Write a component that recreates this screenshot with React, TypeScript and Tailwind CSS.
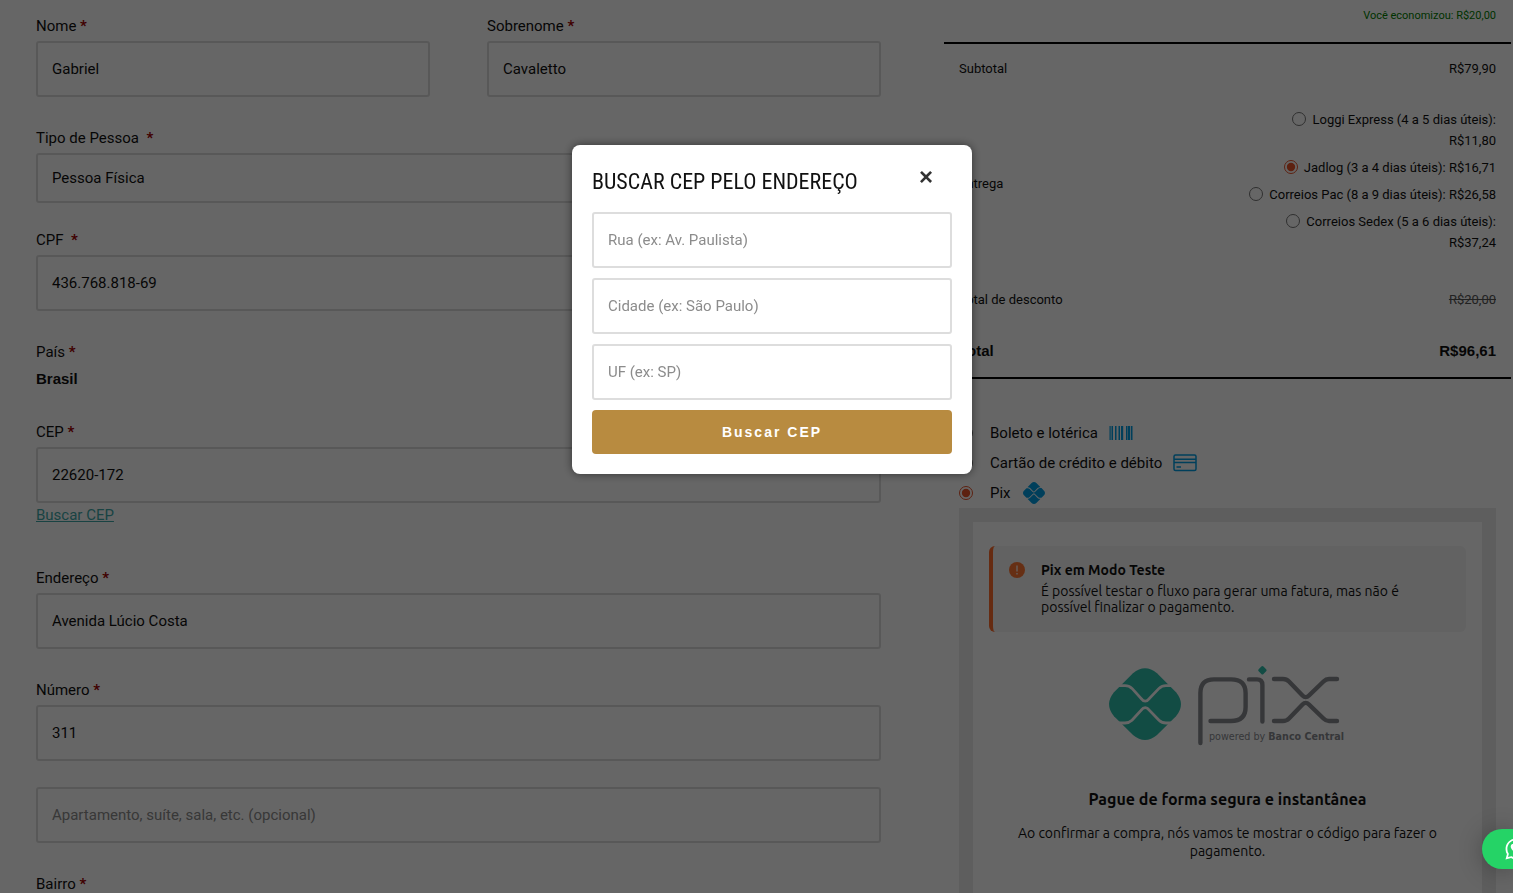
import React from "react";
import { FaPix, FaWhatsapp } from "react-icons/fa6";

const boxClass =
  "block w-full rounded-[3px] border-2 border-[#ddd] bg-white px-[14px] text-[15px] text-[#111] placeholder:text-[#8c8c8c] outline-none";

function Required() {
  return <span className="font-bold text-[#a00000]">*</span>;
}

type FieldProps = {
  id: string;
  label?: string;
  value?: string;
  placeholder?: string;
  spaced?: boolean;
  children?: React.ReactNode;
};

function Field({ id, label, value, placeholder, spaced, children }: FieldProps) {
  return (
    <div>
      {label && (
        <label htmlFor={id} className="block text-[15px] leading-[30px]">
          {label} {spaced && <>&nbsp;</>}
          <Required />
        </label>
      )}
      {children ?? (
        <input
          id={id}
          type="text"
          defaultValue={value}
          placeholder={placeholder}
          aria-label={label ?? placeholder}
          className={`${boxClass} h-14`}
        />
      )}
    </div>
  );
}

function Radio(props: { id: string; name: string; checked?: boolean }) {
  return (
    <input
      type="radio"
      id={props.id}
      name={props.name}
      defaultChecked={props.checked}
      className="size-[14px] shrink-0 align-[-2px] accent-[#e8532a]"
    />
  );
}

const shipping = [
  { id: "loggi", name: "Loggi Express (4 a 5 dias úteis):", price: "R$11,80", wrap: true },
  { id: "jadlog", name: "Jadlog (3 a 4 dias úteis):", price: "R$16,71", checked: true },
  { id: "pac", name: "Correios Pac (8 a 9 dias úteis):", price: "R$26,58" },
  { id: "sedex", name: "Correios Sedex (5 a 6 dias úteis):", price: "R$37,24", wrap: true },
];

function BarcodeIcon() {
  return (
    <svg width="24" height="14" viewBox="0 0 24 14" fill="#009ee3" aria-hidden="true">
      <rect x="0.500" width="1.200" height="14" />
      <rect x="2.500" width="1.500" height="14" />
      <rect x="6" width="1.500" height="14" />
      <rect x="9.500" width="1.500" height="14" />
      <rect x="12" width="2.200" height="14" />
      <rect x="17" width="1.500" height="14" />
      <rect x="19" width="2" height="14" />
      <rect x="21.800" width="1.700" height="14" />
    </svg>
  );
}

function CardIcon() {
  return (
    <svg width="24" height="18" viewBox="0 0 24 18" fill="none" stroke="#009ee3" strokeWidth="1.5" aria-hidden="true">
      <rect x="1" y="1" width="22" height="15.5" rx="1.5" />
      <path d="M1 5.2H23M1 8.6H23M3.5 13H8" />
    </svg>
  );
}

function PixLogo() {
  return (
    <svg width="270" height="110" viewBox="3 0 270 110" fill="none" role="img" aria-label="Pix, powered by Banco Central">
      <path
        d="M43 23.3Q55 13.3 67 23.3L86 42.2Q96 54.2 86 66.2L67 85.1Q55 95.1 43 85.1L24 66.2Q14 54.2 24 42.2Z"
        fill="#2ebdab"
      />
      <g stroke="#fff" strokeWidth="2.8">
        <path d="M26 35.6H35Q39 35.6 42 38.4L51 48.4Q55.2 54 59.5 48.4L69 38.4Q72 35.6 76 35.6H85" />
        <path d="M26 73H35Q39 73 42 70.2L51 60.4Q55.2 54.8 59.5 60.4L69 70.2Q72 73 76 73H85" />
      </g>
      <g stroke="#888a90" strokeWidth="4.4" strokeLinecap="round" strokeLinejoin="round">
        <path d="M110.4 93V43Q110.4 29.4 124 29.4H141Q155.6 29.4 155.6 43V57Q155.6 71 141 71H120.5" />
        <path d="M159 29.4H167Q172.4 29.4 172.4 35V71.5" />
        <path d="M184 29H193Q196.500 29 199 31.500L212.500 45.500Q215.700 48.800 219 45.500L233.500 31.500Q236 29 239 29H247" />
        <path d="M184 71H193Q196.500 71 199 68.500L212.500 54.500Q215.700 51.200 219 54.500L233.500 68.500Q236 71 239 71H247" />
      </g>
      <rect x="169" y="16.800" width="6.800" height="6.800" rx="1.500" transform="rotate(45 172.400 20.200)" fill="#2ebdab" />
      <text x="119" y="90" fontSize="9.600" fill="#888a90" className="font-['DejaVu_Sans',sans-serif]">
        powered by <tspan fontWeight="700">Banco Central</tspan>
      </text>
    </svg>
  );
}

function BillingForm() {
  return (
    <form className="flex flex-col gap-[26px] pt-[11px]">
      <div className="grid grid-cols-2 gap-[57px]">
        <Field id="nome" label="Nome" value="Gabriel" />
        <Field id="sobrenome" label="Sobrenome" value="Cavaletto" />
      </div>
      <div className="flex flex-col gap-[22px]">
        <Field id="tipo" label="Tipo de Pessoa" spaced>
          <select id="tipo" className={`${boxClass} h-[50px] appearance-none`}>
            <option>Pessoa Física</option>
            <option>Pessoa Jurídica</option>
          </select>
        </Field>
        <Field id="cpf" label="CPF" value="436.768.818-69" spaced />
      </div>
      <div>
        <p className="text-[15px] leading-[30px]">
          País <Required />
        </p>
        <p className="font-['Liberation_Sans',sans-serif] text-[15px] leading-6 font-bold">Brasil</p>
      </div>
      <div className="mb-[10px]">
        <Field id="cep" label="CEP" value="22620-172" />
        <a href="#buscar-cep" className="block w-fit text-[15px] leading-6 text-[#3fa9a9] underline">
          Buscar CEP
        </a>
      </div>
      <Field id="endereco" label="Endereço" value="Avenida Lúcio Costa" />
      <Field id="numero" label="Número" value="311" />
      <Field id="complemento" placeholder="Apartamento, suíte, sala, etc. (opcional)" />
      <Field id="bairro" label="Bairro" />
    </form>
  );
}

function OrderTotals() {
  return (
    <table className="w-full border-y-2 border-black text-[13px] leading-[21px]">
      <tbody>
        <tr className="h-[50px]">
          <th className="pl-[15px] text-left font-normal">Subtotal</th>
          <td className="pr-[15px] text-right">R$79,90</td>
        </tr>
        <tr>
          <th className="pl-[15px] text-left font-normal">Entrega</th>
          <td className="pt-4 pr-[15px] pb-[21px] text-right">
            <ul className="flex flex-col gap-[6px]">
              {shipping.map((s) => (
                <li key={s.id}>
                  <Radio id={s.id} name="entrega" checked={s.checked} />
                  <label htmlFor={s.id} className="pl-[6px]">
                    {s.name} {s.wrap && <br />}
                    {s.price}
                  </label>
                </li>
              ))}
            </ul>
          </td>
        </tr>
        <tr className="h-[50px]">
          <th className="pl-[15px] text-left font-normal">Total de desconto</th>
          <td className="pr-[15px] text-right text-[#555] line-through">R$20,00</td>
        </tr>
        <tr className="h-[54px] font-['Liberation_Sans',sans-serif] text-[15px] font-bold">
          <th className="pl-[15px] text-left">Total</th>
          <td className="pr-[15px] text-right">R$96,61</td>
        </tr>
      </tbody>
    </table>
  );
}

function Payment() {
  return (
    <div className="mt-[39px] px-[15px]">
      <ul className="text-[15px] leading-[30px]">
        <li className="flex items-center">
          <Radio id="boleto" name="pagamento" />
          <label htmlFor="boleto" className="flex items-center gap-[11px] pl-[17px]">
            Boleto e lotérica <BarcodeIcon />
          </label>
        </li>
        <li className="flex items-center">
          <Radio id="cartao" name="pagamento" />
          <label htmlFor="cartao" className="flex items-center gap-[11px] pl-[17px]">
            Cartão de crédito e débito <CardIcon />
          </label>
        </li>
        <li className="flex items-center">
          <Radio id="pix" name="pagamento" checked />
          <label htmlFor="pix" className="flex items-center gap-3 pl-[17px]">
            Pix <FaPix className="size-[22px] text-[#009ee3]" />
          </label>
        </li>
      </ul>
      <div className="bg-[#ebebeb] p-[14px] font-['Ubuntu','Open_Sans',sans-serif] text-sm">
        <div className="bg-white px-4 pt-6 pb-20">
          <div className="flex gap-4 rounded-md border-l-4 border-[#ff6b2c] bg-[#f5f5f5] pt-4 pb-[17px] pl-4">
            <svg width="16" height="16" viewBox="0 0 16 16" className="shrink-0" aria-hidden="true">
              <circle cx="8" cy="8" r="8" fill="#ff7733" />
              <path d="M8 3.500V9.500M8 11V12.500" stroke="#fff" strokeWidth="1.200" />
            </svg>
            <div className="flex max-w-[370px] flex-col gap-[5px]">
              <p className="leading-4 font-semibold">Pix em Modo Teste</p>
              <p className="leading-4">
                É possível testar o fluxo para gerar uma fatura, mas não é possível finalizar o pagamento.
              </p>
            </div>
          </div>
          <div className="mt-[18px] flex justify-center">
            <PixLogo />
          </div>
          <div className="mx-auto max-w-[440px] text-center">
            <h3 className="mt-[27px] text-base leading-6 font-semibold">Pague de forma segura e instantânea</h3>
            <p className="mt-[13px] leading-[18px]">
              Ao confirmar a compra, nós vamos te mostrar o código para fazer o pagamento.
            </p>
          </div>
        </div>
      </div>
    </div>
  );
}

function SearchDialog() {
  return (
    <div className="fixed inset-0 flex items-start justify-center bg-black/60 pt-[145px] pl-[31px]">
      <div
        role="dialog"
        aria-labelledby="dialog-title"
        className="relative w-[400px] max-w-full rounded-lg bg-white p-5 shadow-[0_0_10px_rgba(0,0,0,0.5)]"
      >
        <h2 id="dialog-title" className="mb-[13px] font-['Roboto_Condensed',Roboto,sans-serif] text-[22px] leading-[34px]">
          BUSCAR CEP PELO ENDEREÇO
        </h2>
        <button
          type="button"
          aria-label="Fechar"
          className="absolute top-5 right-[39px] font-['Liberation_Sans',sans-serif] text-2xl leading-6 font-bold text-[#333]"
        >
          ×
        </button>
        <form className="flex flex-col gap-[10px]">
          <Field id="rua" placeholder="Rua (ex: Av. Paulista)" />
          <Field id="cidade" placeholder="Cidade (ex: São Paulo)" />
          <Field id="uf" placeholder="UF (ex: SP)" />
          <button
            type="button"
            className="h-11 rounded bg-[#b88b40] font-['Liberation_Sans',sans-serif] text-sm font-bold tracking-[2px] text-white"
          >
            Buscar CEP
          </button>
        </form>
      </div>
    </div>
  );
}

export default function App() {
  return (
    <div className="h-screen overflow-hidden bg-white font-['Roboto',sans-serif] text-[#111]">
      <main className="grid grid-cols-[845fr_567fr] gap-[63px] pr-[2px] pl-9">
        <BillingForm />
        <section className="pt-1">
          <p className="mb-[14px] pr-[15px] text-right text-[11px] leading-6 text-[#008000]">
            Você economizou: R$20,00
          </p>
          <OrderTotals />
          <Payment />
        </section>
      </main>
      <SearchDialog />
      <a
        href="#whatsapp"
        aria-label="WhatsApp"
        className="fixed right-0 bottom-6 flex h-10 w-[31px] items-center overflow-hidden rounded-l-full bg-[#25d366] pl-[22px] text-white shadow-[0_2px_24px_rgba(0,0,0,0.3)]"
      >
        <FaWhatsapp className="size-6 shrink-0" />
      </a>
    </div>
  );
}
